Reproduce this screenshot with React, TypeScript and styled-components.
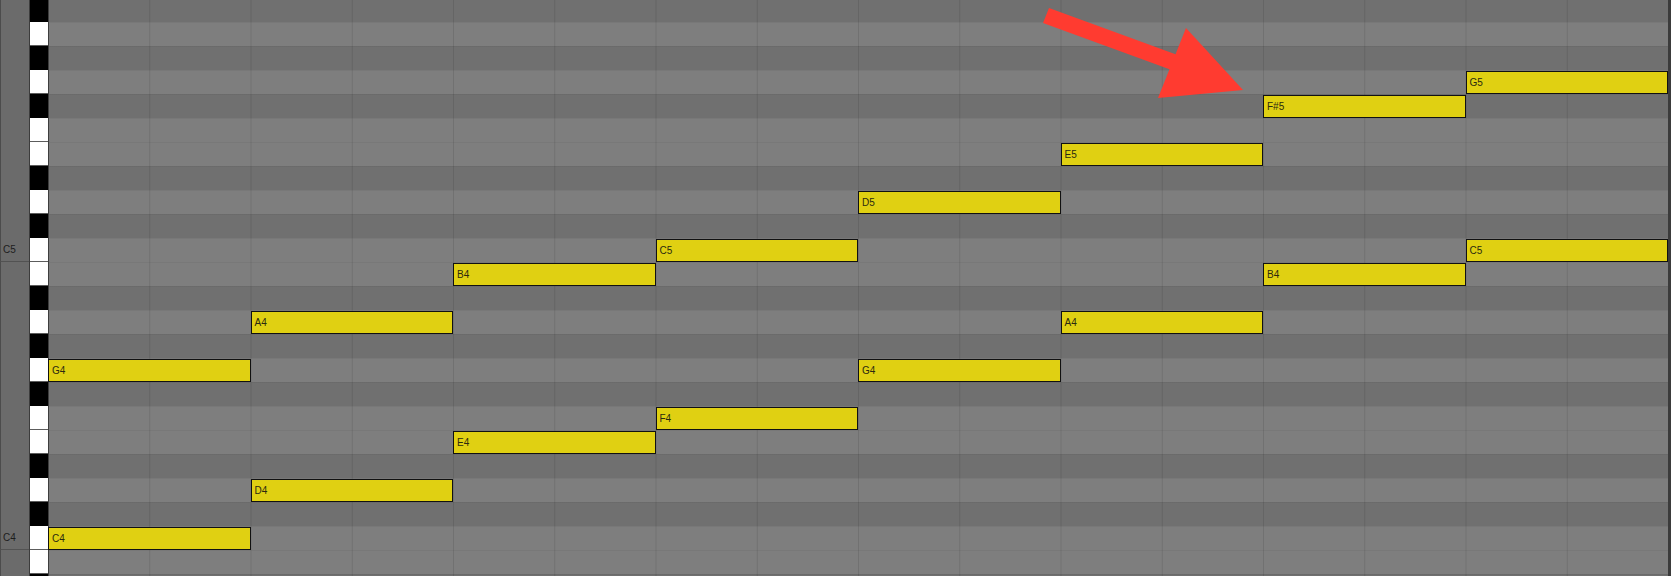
import React from "react";
import styled, { createGlobalStyle } from "styled-components";

const GlobalStyle = createGlobalStyle`
  html, body {
    margin: 0;
    padding: 0;
    background: #707070;
    overflow: hidden;
  }
  body {
    font-family: "Liberation Sans", Arial, sans-serif;
  }
`;

// pitches from the top of the view down to the bottom
const PITCHES = [
  "A#5", "A5", "G#5", "G5", "F#5", "F5", "E5", "D#5", "D5", "C#5", "C5",
  "B4", "A#4", "A4", "G#4", "G4", "F#4", "F4", "E4", "D#4", "D4", "C#4", "C4",
  "B3", "A#3",
];

// start is in beats, every note lasts two beats
const NOTES = [
  { pitch: "C4", start: 0 },
  { pitch: "G4", start: 0 },
  { pitch: "D4", start: 2 },
  { pitch: "A4", start: 2 },
  { pitch: "E4", start: 4 },
  { pitch: "B4", start: 4 },
  { pitch: "F4", start: 6 },
  { pitch: "C5", start: 6 },
  { pitch: "G4", start: 8 },
  { pitch: "D5", start: 8 },
  { pitch: "A4", start: 10 },
  { pitch: "E5", start: 10 },
  { pitch: "B4", start: 12 },
  { pitch: "F#5", start: 12 },
  { pitch: "C5", start: 14 },
  { pitch: "G5", start: 14 },
];

const Roll = styled.div`
  position: relative;
  width: 1671px;
  height: 576px;
  overflow: hidden;
`;

const Rows = styled.div`
  display: flex;
  flex-direction: column;
  margin-top: -2px;
`;

const Row = styled.div`
  display: grid;
  grid-template-columns: 29px 19px 1620px 3px;
  height: 24px;
  flex: none;
`;

const Label = styled.div<{ $octave: boolean }>`
  box-sizing: border-box;
  display: flex;
  align-items: center;
  padding-left: 2px;
  background: #6b6b6b;
  border-left: 1px solid #4c4c4c;
  border-bottom: ${(p) => (p.$octave ? "1px solid #525252" : "none")};
  font-size: 10px;
  color: #1d1d1d;
`;

const Key = styled.div<{ $black: boolean }>`
  box-sizing: border-box;
  border-left: 1px solid #3c3c3c;
  background: ${(p) => (p.$black ? "#000" : "#fff")};
  box-shadow: ${(p) => (p.$black ? "none" : "inset 0 -1px 0 #5c5c5c")};
`;

const Lane = styled.div<{ $black: boolean }>`
  box-sizing: border-box;
  display: grid;
  grid-template-columns: repeat(16, 1fr);
  grid-template-rows: 23px;
  padding-top: 1px;
  background-color: ${(p) => (p.$black ? "#707070" : "#7e7e7e")};
  background-image: linear-gradient(to right, #3e3e3e 1px, transparent 1px),
    linear-gradient(to right, rgba(0, 0, 0, 0.1) 1px, transparent 1px),
    linear-gradient(to bottom, rgba(0, 0, 0, 0.05) 1px, transparent 1px);
  background-size: 100% 100%, calc(100% / 16) 100%, 100% 100%;
  background-repeat: no-repeat, repeat-x, no-repeat;
`;

const Note = styled.div<{ $start: number }>`
  grid-column: ${(p) => p.$start + 1} / span 2;
  grid-row: 1;
  box-sizing: border-box;
  display: flex;
  align-items: center;
  min-width: 0;
  padding-left: 3px;
  background: #e0d012;
  border: 1px solid #111;
  font-size: 10px;
  color: #2b2a10;
  white-space: nowrap;
`;

const Edge = styled.div`
  background: #3b3b3b;
`;

const Overlay = styled.svg`
  position: absolute;
  top: 0;
  left: 0;
  pointer-events: none;
`;

function PitchRow({ pitch }: { pitch: string }) {
  const black = pitch.includes("#");
  const isC = pitch.startsWith("C") && !black;
  const notes = NOTES.filter((n) => n.pitch === pitch);

  return (
    <Row>
      <Label $octave={isC}>{isC ? pitch : ""}</Label>
      <Key $black={black} />
      <Lane $black={black}>
        {notes.map((n) => (
          <Note key={n.start} $start={n.start}>
            {n.pitch}
          </Note>
        ))}
      </Lane>
      <Edge />
    </Row>
  );
}

export default function App() {
  return (
    <>
      <GlobalStyle />
      <Roll>
        <Rows>
          {PITCHES.map((p) => (
            <PitchRow key={p} pitch={p} />
          ))}
        </Rows>
        <Overlay width="1671" height="576" viewBox="0 0 1671 576">
          <polygon
            points="1049,8 1175.5,54.2 1186,28 1243,90 1158,98 1169.5,69.2 1043,23"
            fill="#ff3b30"
          />
        </Overlay>
      </Roll>
    </>
  );
}
